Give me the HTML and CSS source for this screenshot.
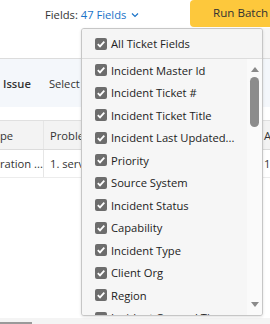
FILE: index.html
```html
<!DOCTYPE html>
<html>
<head>
<meta charset="utf-8">
<link rel="stylesheet" href="styles.css">
</head>
<body>
<div class="page">
  <div class="topbar">
    <div class="fields">Fields: <span class="fields-link">47 Fields</span>
      <svg class="chev" width="8" height="6" viewBox="0 0 8 6"><path d="M1 1.5 L4 4.5 L7 1.5" fill="none" stroke="#1a73c8" stroke-width="1.2"/></svg>
    </div>
    <button class="run">Run Batch</button>
  </div>
  <div class="subbar"><div class="subbar-right"></div></div>
  <div class="toolbar">
    <span class="issue">Issue</span>
    <span class="select">Select Issue</span>
  </div>
  <div class="spacer"></div>
  <div class="thead">
    <div class="cell c1">pe</div>
    <div class="cell c2">Problem</div>
    <div class="cell c3">A</div>
  </div>
  <div class="trow">
    <div class="cell c1">ration ...</div>
    <div class="cell c2">1. service</div>
    <div class="cell c3">1</div>
  </div>
  <div class="fill"></div>
  <div class="hscroll"><div class="hthumb"></div></div>

  <div class="popup">
    <div class="popup-head">
      <span class="cb"><svg width="12" height="12" viewBox="0 0 12 12"><path d="M2.8 6.2 L5 8.4 L9.3 3.6" fill="none" stroke="#fff" stroke-width="1.8"/></svg></span>
      <span>All Ticket Fields</span>
    </div>
    <div class="popup-body">
      <ul class="list">
        <li><span class="cb"><svg width="12" height="12" viewBox="0 0 12 12"><path d="M2.8 6.2 L5 8.4 L9.3 3.6" fill="none" stroke="#fff" stroke-width="1.8"/></svg></span>Incident Master Id</li>
        <li><span class="cb"><svg width="12" height="12" viewBox="0 0 12 12"><path d="M2.8 6.2 L5 8.4 L9.3 3.6" fill="none" stroke="#fff" stroke-width="1.8"/></svg></span>Incident Ticket #</li>
        <li><span class="cb"><svg width="12" height="12" viewBox="0 0 12 12"><path d="M2.8 6.2 L5 8.4 L9.3 3.6" fill="none" stroke="#fff" stroke-width="1.8"/></svg></span>Incident Ticket Title</li>
        <li><span class="cb"><svg width="12" height="12" viewBox="0 0 12 12"><path d="M2.8 6.2 L5 8.4 L9.3 3.6" fill="none" stroke="#fff" stroke-width="1.8"/></svg></span>Incident Last Updated...</li>
        <li><span class="cb"><svg width="12" height="12" viewBox="0 0 12 12"><path d="M2.8 6.2 L5 8.4 L9.3 3.6" fill="none" stroke="#fff" stroke-width="1.8"/></svg></span>Priority</li>
        <li><span class="cb"><svg width="12" height="12" viewBox="0 0 12 12"><path d="M2.8 6.2 L5 8.4 L9.3 3.6" fill="none" stroke="#fff" stroke-width="1.8"/></svg></span>Source System</li>
        <li><span class="cb"><svg width="12" height="12" viewBox="0 0 12 12"><path d="M2.8 6.2 L5 8.4 L9.3 3.6" fill="none" stroke="#fff" stroke-width="1.8"/></svg></span>Incident Status</li>
        <li><span class="cb"><svg width="12" height="12" viewBox="0 0 12 12"><path d="M2.8 6.2 L5 8.4 L9.3 3.6" fill="none" stroke="#fff" stroke-width="1.8"/></svg></span>Capability</li>
        <li><span class="cb"><svg width="12" height="12" viewBox="0 0 12 12"><path d="M2.8 6.2 L5 8.4 L9.3 3.6" fill="none" stroke="#fff" stroke-width="1.8"/></svg></span>Incident Type</li>
        <li><span class="cb"><svg width="12" height="12" viewBox="0 0 12 12"><path d="M2.8 6.2 L5 8.4 L9.3 3.6" fill="none" stroke="#fff" stroke-width="1.8"/></svg></span>Client Org</li>
        <li><span class="cb"><svg width="12" height="12" viewBox="0 0 12 12"><path d="M2.8 6.2 L5 8.4 L9.3 3.6" fill="none" stroke="#fff" stroke-width="1.8"/></svg></span>Region</li>
        <li><span class="cb"><svg width="12" height="12" viewBox="0 0 12 12"><path d="M2.8 6.2 L5 8.4 L9.3 3.6" fill="none" stroke="#fff" stroke-width="1.8"/></svg></span>Incident Opened Time</li>
      </ul>
      <div class="vscroll">
        <span class="arrow-up"></span>
        <span class="thumb"></span>
        <span class="grow"></span>
        <span class="arrow-down"></span>
      </div>
    </div>
  </div>
</div>
</body>
</html>
```

FILE: styles.css
```css
* { box-sizing: border-box; }
html, body { margin: 0; padding: 0; }
body {
  width: 270px;
  height: 324px;
  overflow: hidden;
  background: #fff;
  font-family: "Open Sans", "Liberation Sans", sans-serif;
  font-size: 11.2px;
  color: #333;
}
.page {
  position: relative;
  width: 270px;
  height: 324px;
  display: flex;
  flex-direction: column;
  overflow: hidden;
}
.topbar {
  height: 28px;
  flex: none;
  display: flex;
  align-items: flex-start;
  padding-left: 45px;
}
.fields {
  flex: none;
  width: 145px;
  margin-top: 7px;
  line-height: 16px;
  color: #333;
  white-space: nowrap;
}
.fields-link { color: #1a73c8; }
.chev { margin-left: 2px; vertical-align: 1px; }
.run {
  flex: none;
  width: 100px;
  height: 27px;
  border: none;
  border-radius: 4px 0 0 4px;
  background: #fdc83c;
  color: #333;
  font-family: inherit;
  font-size: 11.6px;
  text-align: left;
  padding: 0 0 2px 23px;
  white-space: nowrap;
}
.subbar {
  height: 31px;
  flex: none;
  border-bottom: 1px solid #dcdcdc;
  display: flex;
  justify-content: flex-end;
}
.subbar-right { width: 10px; background: #f6f6f6; }
.toolbar {
  height: 48px;
  flex: none;
  background: #f4f7fb;
  display: flex;
  align-items: center;
  padding-left: 3px;
  gap: 18px;
  white-space: nowrap;
}
.issue { font-weight: 600; color: #333; }
.select { color: #333; }
.spacer { height: 13px; flex: none; }
.thead, .trow {
  display: flex;
  flex: none;
  white-space: nowrap;
}
.thead {
  height: 30px;
  background: #f3f3f3;
  border-top: 1px solid #e0e0e0;
  border-bottom: 1px solid #dcdcdc;
}
.trow {
  height: 28px;
  border-bottom: 1px solid #ececec;
}
.cell {
  display: flex;
  align-items: center;
  overflow: hidden;
}
.c1 { width: 44px; flex: none; border-right: 1px solid #e6e6e6; }
.c2 { width: 218px; flex: none; padding-left: 6px; border-right: 1px solid #e6e6e6; }
.c3 { flex: 1; padding-left: 2px; }
.fill { flex: 1; }
.hscroll {
  height: 6px;
  flex: none;
  background: #f4f4f4;
  display: flex;
  align-items: flex-end;
}
.hthumb { width: 32px; height: 2px; background: #9a9a9a; }

.popup {
  position: absolute;
  left: 81px;
  top: 28px;
  width: 182px;
  height: 288px;
  border: 1px solid #c6c6c6;
  border-radius: 3px;
  background: #f6f6f6;
  box-shadow: 0 1px 3px rgba(0,0,0,0.12);
  display: flex;
  flex-direction: column;
  overflow: hidden;
}
.popup-head {
  height: 30px;
  flex: none;
  display: flex;
  align-items: center;
  padding-left: 13px;
  border-bottom: 1px solid #dcdcdc;
  background: #f5f5f5;
  color: #222;
}
.cb {
  width: 12px;
  height: 12px;
  border-radius: 2px;
  background: #6d6d6d;
  display: inline-flex;
  margin-right: 4px;
  flex: none;
}
.cb svg { display: block; }
.popup-body {
  flex: 1;
  display: flex;
  overflow: hidden;
}
.list {
  list-style: none;
  margin: 0;
  padding: 0;
  flex: 1;
  background: #f6f6f6;
}
.list li {
  height: 22.5px;
  display: flex;
  align-items: center;
  padding-left: 13px;
  color: #222;
  white-space: nowrap;
}
.vscroll {
  width: 15px;
  flex: none;
  background: #fafafa;
  display: flex;
  flex-direction: column;
  align-items: center;
  padding: 8px 0 8px;
}
.arrow-up {
  width: 0; height: 0;
  border-left: 4px solid transparent;
  border-right: 4px solid transparent;
  border-bottom: 5px solid #8a8a8a;
}
.thumb {
  margin-top: 5px;
  width: 9px;
  height: 50px;
  border-radius: 5px;
  background: #8c8c8c;
}
.grow { flex: 1; }
.arrow-down {
  width: 0; height: 0;
  border-left: 4px solid transparent;
  border-right: 4px solid transparent;
  border-top: 5px solid #8a8a8a;
}
```
